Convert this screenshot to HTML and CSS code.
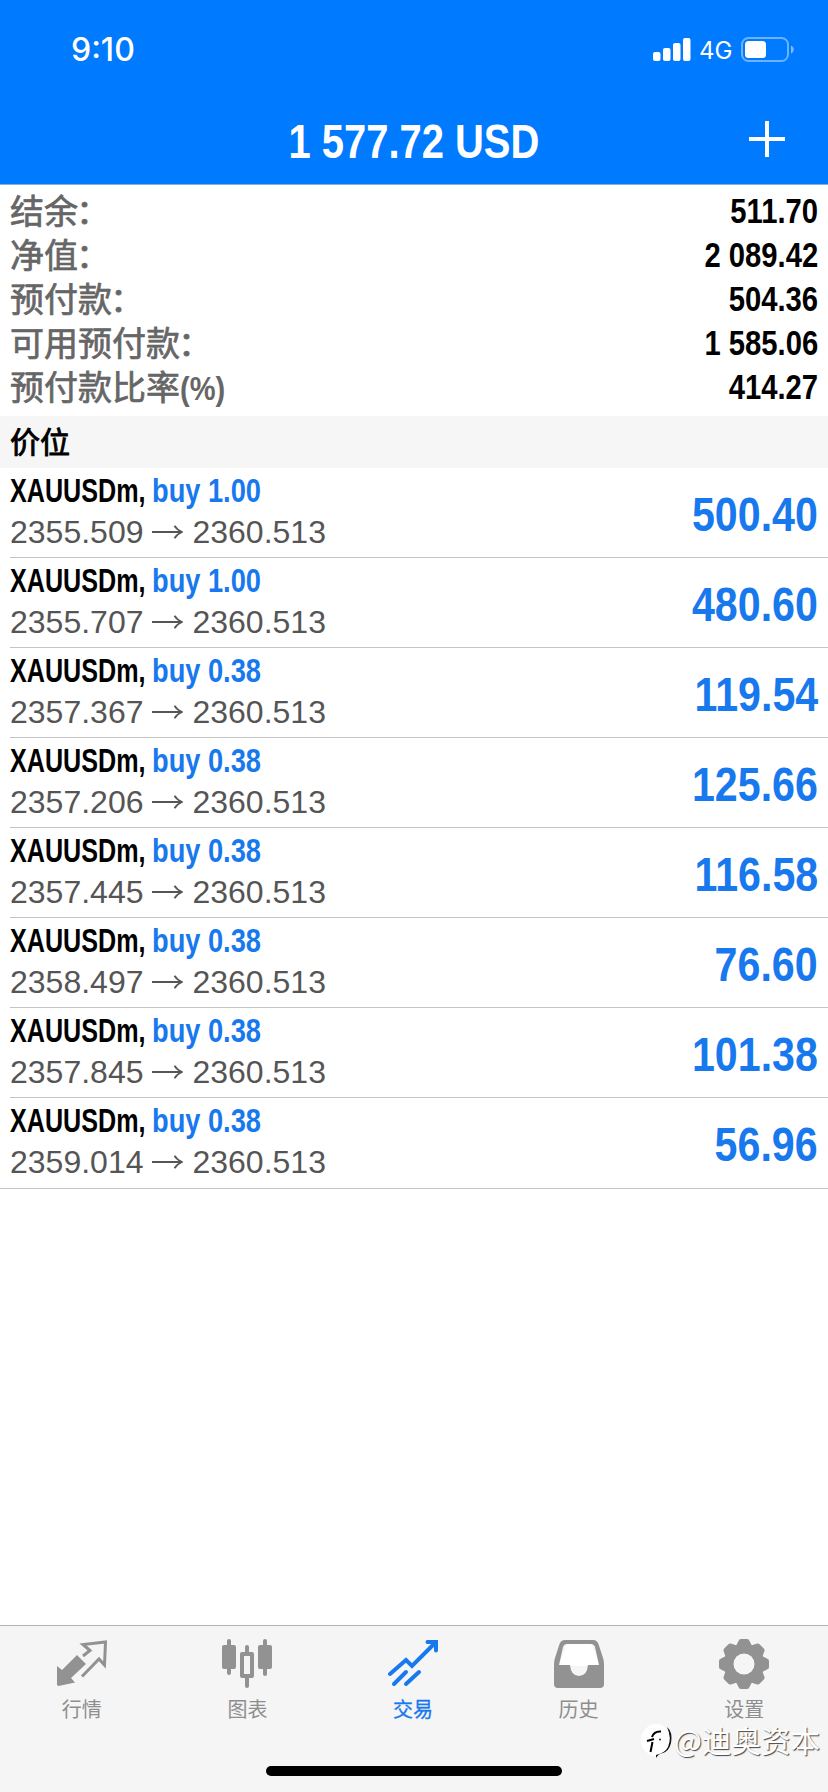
FILE: index.html
```html
<!DOCTYPE html>
<html lang="zh-CN">
<head>
<meta charset="utf-8">
<title>交易</title>
<link rel="stylesheet" href="styles.css">
</head>
<body>
<div class="app">
  <header class="header">
    <div class="status">
      <span class="time">9:10</span>
      <svg class="signal" width="38" height="24" viewBox="0 0 38 24" fill="#fff"><rect x="0" y="14" width="7.5" height="9" rx="2"/><rect x="10" y="10" width="7.5" height="13" rx="2"/><rect x="20" y="5" width="7.5" height="18" rx="2"/><rect x="30" y="0" width="7.5" height="23" rx="2"/></svg>
      <span class="network">4G</span>
      <svg class="battery" width="54" height="26" viewBox="0 0 54 26"><rect x="1" y="1" width="46" height="23" rx="6.5" fill="none" stroke="#fff" stroke-opacity=".42" stroke-width="2"/><rect x="4" y="4" width="21" height="17" rx="3.5" fill="#fff"/><path d="M50 8.500c3.600 1.500 3.600 6.500 0 8z" fill="#fff" fill-opacity=".5"/></svg>
    </div>
    <div class="titlebar">
      <h1 class="title"><span class="narrow title-text">1 577.72 USD</span></h1>
      <svg class="add" width="36" height="36" viewBox="0 0 36 36"><path d="M0 18H36M18 0V36" stroke="#fff" stroke-width="4"/></svg>
    </div>
  </header>
  <main class="main">
    <section class="summary">
      <div class="line"><span class="label">结余<span class="colon">：</span></span><span class="narrow amount">511.70</span></div>
      <div class="line"><span class="label">净值<span class="colon">：</span></span><span class="narrow amount">2 089.42</span></div>
      <div class="line"><span class="label">预付款<span class="colon">：</span></span><span class="narrow amount">504.36</span></div>
      <div class="line"><span class="label">可用预付款<span class="colon">：</span></span><span class="narrow amount">1 585.06</span></div>
      <div class="line"><span class="label">预付款比率<span class="narrow percent">(%)</span></span><span class="narrow amount">414.27</span></div>
    </section>
    <h2 class="section">价位</h2>
    <ul class="positions">
      <li class="row"><div class="deal"><span class="narrow symbol">XAUUSDm,</span><span class="narrow side">buy 1.00</span></div><div class="prices"><span>2355.509</span><svg class="arrow" width="31" height="14" viewBox="0 0 31 14"><path d="M0 7H30M22.500 .8Q25 5 30 7Q25 9 22.500 13.200"/></svg><span>2360.513</span></div><span class="narrow profit">500.40</span></li>
      <li class="row"><div class="deal"><span class="narrow symbol">XAUUSDm,</span><span class="narrow side">buy 1.00</span></div><div class="prices"><span>2355.707</span><svg class="arrow" width="31" height="14" viewBox="0 0 31 14"><path d="M0 7H30M22.500 .8Q25 5 30 7Q25 9 22.500 13.200"/></svg><span>2360.513</span></div><span class="narrow profit">480.60</span></li>
      <li class="row"><div class="deal"><span class="narrow symbol">XAUUSDm,</span><span class="narrow side">buy 0.38</span></div><div class="prices"><span>2357.367</span><svg class="arrow" width="31" height="14" viewBox="0 0 31 14"><path d="M0 7H30M22.500 .8Q25 5 30 7Q25 9 22.500 13.200"/></svg><span>2360.513</span></div><span class="narrow profit">119.54</span></li>
      <li class="row"><div class="deal"><span class="narrow symbol">XAUUSDm,</span><span class="narrow side">buy 0.38</span></div><div class="prices"><span>2357.206</span><svg class="arrow" width="31" height="14" viewBox="0 0 31 14"><path d="M0 7H30M22.500 .8Q25 5 30 7Q25 9 22.500 13.200"/></svg><span>2360.513</span></div><span class="narrow profit">125.66</span></li>
      <li class="row"><div class="deal"><span class="narrow symbol">XAUUSDm,</span><span class="narrow side">buy 0.38</span></div><div class="prices"><span>2357.445</span><svg class="arrow" width="31" height="14" viewBox="0 0 31 14"><path d="M0 7H30M22.500 .8Q25 5 30 7Q25 9 22.500 13.200"/></svg><span>2360.513</span></div><span class="narrow profit">116.58</span></li>
      <li class="row"><div class="deal"><span class="narrow symbol">XAUUSDm,</span><span class="narrow side">buy 0.38</span></div><div class="prices"><span>2358.497</span><svg class="arrow" width="31" height="14" viewBox="0 0 31 14"><path d="M0 7H30M22.500 .8Q25 5 30 7Q25 9 22.500 13.200"/></svg><span>2360.513</span></div><span class="narrow profit">76.60</span></li>
      <li class="row"><div class="deal"><span class="narrow symbol">XAUUSDm,</span><span class="narrow side">buy 0.38</span></div><div class="prices"><span>2357.845</span><svg class="arrow" width="31" height="14" viewBox="0 0 31 14"><path d="M0 7H30M22.500 .8Q25 5 30 7Q25 9 22.500 13.200"/></svg><span>2360.513</span></div><span class="narrow profit">101.38</span></li>
      <li class="row"><div class="deal"><span class="narrow symbol">XAUUSDm,</span><span class="narrow side">buy 0.38</span></div><div class="prices"><span>2359.014</span><svg class="arrow" width="31" height="14" viewBox="0 0 31 14"><path d="M0 7H30M22.500 .8Q25 5 30 7Q25 9 22.500 13.200"/></svg><span>2360.513</span></div><span class="narrow profit">56.96</span></li>
    </ul>
  </main>
  <nav class="tabs">
    <a class="tab"><svg width="50" height="50" viewBox="0 0 50 50"><path fill="#929292" d="M0 27L5 31L20 16L29 25L14 39L18 43.500L1.500 47L0 46Z"/><path fill="none" stroke="#929292" stroke-width="3" d="M26 17L33 11.500L26 5.500L48.500 3L47.500 26L42 20L25 37.500"/></svg><span>行情</span></a>
    <a class="tab"><svg width="50" height="50" viewBox="0 0 50 50" fill="#929292"><rect x="5" y="0" width="4" height="36" rx="2"/><rect x="0" y="6" width="14" height="24" rx="2"/><rect x="41" y="0" width="4" height="37" rx="2"/><rect x="36" y="6" width="14" height="24" rx="2"/><rect x="23" y="6" width="4" height="10" rx="2"/><rect x="23" y="37" width="4" height="12" rx="2"/><path fill-rule="evenodd" d="M20 13h10q2 0 2 2v22q0 2-2 2h-10q-2 0-2-2v-22q0-2 2-2zM22 17v18h6v-18z"/></svg><span>图表</span></a>
    <a class="tab active"><svg width="50" height="50" viewBox="0 0 50 50" fill="none" stroke="#1878ee" stroke-width="4" stroke-linecap="round"><path d="M2 35L18 21L24 27L47 4M39.500 3H48V11.500"/><path d="M18 33L6 45M31 33L18 45"/></svg><span>交易</span></a>
    <a class="tab"><svg width="50" height="50" viewBox="0 0 50 50"><path fill="#fff" d="M13 4H37L46 27H5Z"/><path fill="#929292" fill-rule="evenodd" d="M11 1H39Q43 1 44.500 5L49 19Q50 22 50 25V45Q50 49 46 49H4Q0 49 0 45V25Q0 22 1 19L5.500 5Q7 1 11 1ZM13 5Q10 5 9 8L5 26H16Q17 37 25 37Q33 37 34 26H45L41 8Q40 5 37 5Z"/></svg><span>历史</span></a>
    <a class="tab"><svg width="50" height="50" viewBox="0 0 50 50"><g fill="#929292"><circle cx="25" cy="25" r="20"/><g id="teeth"><path id="tooth" d="M16 9L19.500 2Q20 0 22 0H28Q30 0 30.500 2L34 9Z"/><use href="#tooth" transform="rotate(45 25 25)"/><use href="#tooth" transform="rotate(90 25 25)"/><use href="#tooth" transform="rotate(135 25 25)"/></g><use href="#teeth" transform="rotate(180 25 25)"/></g><circle cx="25" cy="25" r="10.500" fill="#f5f5f5"/></svg><span>设置</span></a>
    <div class="home"></div>
    <div class="watermark"><svg width="32" height="34" viewBox="0 0 32 34"><ellipse cx="15" cy="16" rx="15" ry="16" fill="#fff"/><path d="M9.500 28L11.500 18M6 17L13 15M11 13Q13 7 20 7.500" fill="none" stroke="#000" stroke-width="2"/><path d="M26 3Q31 14 27 23Q24 29 15 31V34Q17 30 22 29Q28 27 30 19Q32 8 26 3Z" fill="#111"/><circle cx="19" cy="15.500" r="1" fill="#222"/></svg><span>@迪奥资本</span></div>
  </nav>
</div>
</body>
</html>
```
FILE: styles.css
```css
* { box-sizing: border-box; }
body { margin: 0; background: #fff; font-family: "Liberation Sans", "Noto Sans CJK SC", sans-serif; }
h1, h2, ul { margin: 0; padding: 0; }
svg { display: block; flex: none; }
.app { width: 828px; height: 1792px; display: flex; flex-direction: column; overflow: hidden; }
.narrow { display: inline-block; white-space: nowrap; font-weight: 700; transform-origin: left center; }

.header { height: 185px; flex: none; background: #007aff; border-bottom: 1px solid #86aede; color: #fff; }
.status { height: 100px; display: flex; align-items: center; padding: 0 33px 0 71px; font-family: Inter, sans-serif; }
.time { font-size: 32px; font-weight: 500; line-height: 40px; margin-right: auto; }
.signal { margin-right: 8px; }
.network { font-size: 24px; line-height: 30px; width: 34px; margin-right: 8px; margin-top: 2px; }
.titlebar { height: 78px; display: grid; grid-template-columns: 1fr 320px 1fr; align-items: center; padding: 0 43px; }
.title { grid-column: 2; text-align: center; font-size: 49px; line-height: 50px; display: flex; justify-content: center; padding-top: 4px; }
.title-text { transform: scaleX(.815); transform-origin: center; }
.add { justify-self: end; }

.main { flex: 1; }
.summary { height: 231px; padding: 4px 10px 0 10px; }
.line { height: 44px; display: flex; justify-content: space-between; align-items: center; }
.label { font-size: 34px; line-height: 44px; padding-top: 2px; color: #666; -webkit-text-stroke: .7px #666; white-space: nowrap; }
.colon { margin-left: -2px; }
.percent { font-size: 33px; transform: scaleX(.88); -webkit-text-stroke: 0; }
.amount { font-size: 35px; line-height: 44px; transform: scaleX(.835); transform-origin: right center; }
.section { height: 52px; background: #f6f6f6; padding-left: 10px; font-size: 30px; line-height: 53px; font-weight: 400; -webkit-text-stroke: .9px #000; }

.positions { list-style: none; }
.row { height: 90px; margin-left: 10px; padding-right: 10px; border-bottom: 1px solid #c4c4c6; display: grid; grid-template-columns: 400px 1fr; grid-template-rows: 44px 40px; }
.row:last-child { margin-left: 0; padding-left: 10px; height: 91px; }
.deal { display: grid; grid-template-columns: 142px 1fr; font-size: 33px; line-height: 46px; }
.symbol { transform: scaleX(.762); color: #000; }
.side { color: #1878ee; transform: scaleX(.825); }
.prices { grid-column: 1; grid-row: 2; display: flex; align-items: center; gap: 9px; font-size: 32px; line-height: 40px; color: #555; }
.arrow { fill: none; stroke: #555; stroke-width: 1.8; }
.profit { grid-column: 2; grid-row: 1 / 3; justify-self: end; align-self: center; padding-top: 7px; font-size: 49px; line-height: 60px; color: #1878ee; transform: scaleX(.84); transform-origin: right center; }

.tabs { position: relative; height: 167px; flex: none; display: grid; grid-template-columns: repeat(5, 1fr); background: #f5f5f5; border-top: 1px solid #b4b4b4; }
.tab { display: flex; flex-direction: column; align-items: center; padding: 13px 2px 0 0; color: #8e8e8e; font-size: 20px; line-height: 28px; }
.tab span { margin-top: 7px; }
.active { color: #1878ee; -webkit-text-stroke: .3px #1878ee; }
.home { position: absolute; left: 266px; bottom: 16px; width: 296px; height: 10px; border-radius: 5px; background: #000; }
.watermark { position: absolute; left: 641px; top: 98px; display: flex; align-items: center; gap: 1px; font-family: "Noto Sans CJK SC", sans-serif; font-size: 29.5px; line-height: 34px; color: #fff; text-shadow: 1px 1px 1px #444; white-space: nowrap; }
.watermark span { margin-top: -4px; }
```
